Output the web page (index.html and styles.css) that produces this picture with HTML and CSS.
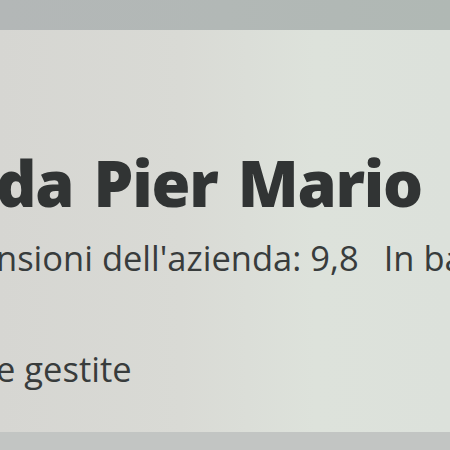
FILE: index.html
```html
<!DOCTYPE html>
<html>
<head>
<meta charset="utf-8">
<link rel="stylesheet" href="styles.css">
</head>
<body>
<div class="screen">
  <div class="topbar"></div>
  <div class="panel">
    <h1 class="title">da Pier Mario</h1>
    <p class="meta">nsioni dell'azienda: 9,8<span class="gap"></span>In ba</p>
    <p class="meta sub">e gestite</p>
  </div>
  <div class="bottombar"></div>
</div>
</body>
</html>
```
FILE: styles.css
```css
html, body {
  margin: 0;
  padding: 0;
}
body {
  width: 450px;
  height: 450px;
  overflow: hidden;
  background: #c3c6c4;
  font-family: "Open Sans", "Noto Sans", sans-serif;
}
.screen {
  width: 450px;
  height: 450px;
  display: flex;
  flex-direction: column;
  overflow: hidden;
}
.topbar {
  height: 30px;
  flex: none;
  background: linear-gradient(90deg, #b3b7b7 0%, #b2b8b6 50%, #b0b8b4 100%);
}
.panel {
  flex: 1;
  background: linear-gradient(90deg, #d6d6d2 0%, #d9dad5 40%, #dde2db 70%, #dce1db 100%);
  padding-top: 121px;
  overflow: hidden;
  white-space: nowrap;
}
.title {
  margin: 0 0 0 -4px;
  font-size: 63px;
  font-weight: 800;
  line-height: 64px;
  color: #313434;
  letter-spacing: -1.2px;
  word-spacing: 5px;
}
.meta {
  margin: 0 0 0 -4px;
  font-size: 34.5px;
  font-weight: 400;
  line-height: 40px;
  color: #383c3c;
}
.gap {
  display: inline-block;
  width: 25px;
}
.title + .meta {
  margin-top: 23px;
}
.sub {
  margin-top: 71px;
}
.bottombar {
  height: 18px;
  flex: none;
  background: #c2c5c3;
}
```
